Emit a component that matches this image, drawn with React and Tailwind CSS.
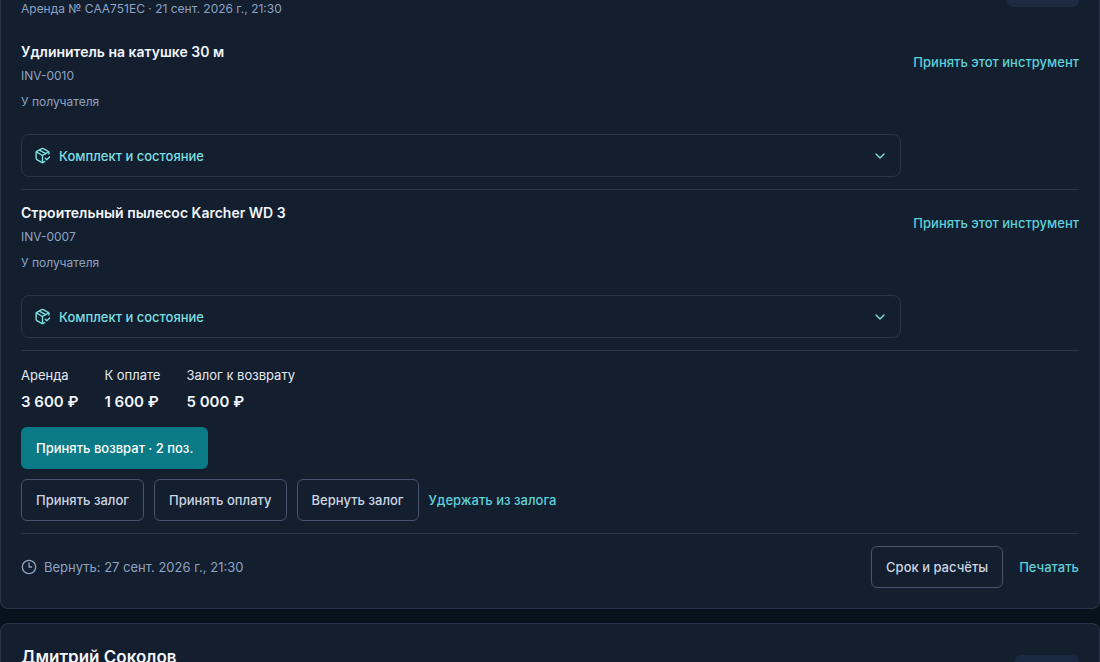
import React from 'react';
import { ChevronDown, Clock3, PackageCheck } from 'lucide-react';

const tools = [
    { code: 'INV-0010', name: 'Удлинитель на катушке 30 м', status: 'У получателя' },
    { code: 'INV-0007', name: 'Строительный пылесос Karcher WD 3', status: 'У получателя' },
];

const totals = [
    { label: 'Аренда', value: '3 600 ₽' },
    { label: 'К оплате', value: '1 600 ₽' },
    { label: 'Залог к возврату', value: '5 000 ₽' },
];

function OutlineButton({ children }) {
    return (
        <button
            type="button"
            className="h-[42px] px-[14px] rounded-md border border-[#46546d] text-[#cbd5e1] font-medium whitespace-nowrap"
        >
            {children}
        </button>
    );
}

function LinkButton({ children }) {
    return (
        <button type="button" className="h-[42px] text-[#5fd0d8] font-medium whitespace-nowrap">
            {children}
        </button>
    );
}

function ToolRow({ tool }) {
    return (
        <li className="flex items-start gap-3 py-3 border-b border-[#29364a]">
            <div className="flex-1 min-w-0">
                <h3 className="text-sm leading-[22px] font-semibold text-[#f1f5f9]">{tool.name}</h3>
                <p className="mt-1 text-xs leading-[18px] text-[#8ea3c2]">{tool.code}</p>
                <p className="mt-2 text-xs leading-[18px] text-[#8ea3c2]">{tool.status}</p>
                <button
                    type="button"
                    className="mt-[23px] w-full h-[43px] px-3 flex items-center gap-2 rounded-lg border border-[#29364a] text-[#7ddfe0] font-medium"
                >
                    <PackageCheck className="w-[17px] h-[17px]" />
                    <span>Комплект и состояние</span>
                    <ChevronDown className="w-4 h-4 ml-auto" />
                </button>
            </div>
            <LinkButton>Принять этот инструмент</LinkButton>
        </li>
    );
}

export default function App() {
    return (
        <div className="h-screen overflow-hidden bg-[#09111d] font-['Inter',sans-serif] text-[13px] leading-5 text-[#e2e8f0]">
            {/* Current rental */}
            <article className="px-5 pb-5 rounded-b-lg border border-t-0 border-[#29364a] bg-[#131e2f]">
                <header className="flex items-start justify-between pb-[11px]">
                    <p className="text-xs leading-[18px] text-[#8ea3c2]">
                        Аренда № CAA751EC · 21 сент. 2026 г., 21:30
                    </p>
                    <span className="w-[72px] h-[7px] rounded-b-md bg-[#1c2940]" />
                </header>

                <ul>
                    {tools.map((tool) => (
                        <ToolRow key={tool.code} tool={tool} />
                    ))}
                </ul>

                <dl className="flex gap-[26px] pt-[14px]">
                    {totals.map((item) => (
                        <div key={item.label}>
                            <dt>{item.label}</dt>
                            <dd className="mt-[6px] text-[15px] leading-[22px] font-semibold text-[#f1f5f9]">{item.value}</dd>
                        </div>
                    ))}
                </dl>

                {/* Actions */}
                <div className="mt-[14px] pb-3 border-b border-[#29364a]">
                    <button
                        type="button"
                        className="h-[42px] px-[15px] rounded-md bg-[#0b7a87] text-white font-medium"
                    >
                        Принять возврат · 2 поз.
                    </button>
                    <div className="mt-[10px] flex flex-wrap gap-[10px]">
                        <OutlineButton>Принять залог</OutlineButton>
                        <OutlineButton>Принять оплату</OutlineButton>
                        <OutlineButton>Вернуть залог</OutlineButton>
                        <LinkButton>Удержать из залога</LinkButton>
                    </div>
                </div>

                <footer className="pt-3 flex items-center gap-4">
                    <p className="mr-auto flex items-center gap-[7px] text-[#8ea3c2]">
                        <Clock3 className="w-4 h-4" />
                        Вернуть: 27 сент. 2026 г., 21:30
                    </p>
                    <OutlineButton>Срок и расчёты</OutlineButton>
                    <LinkButton>Печатать</LinkButton>
                </footer>
            </article>

            {/* Next rental */}
            <article className="mt-[14px] px-5 pt-5 pb-5 rounded-lg border border-[#29364a] bg-[#131e2f]">
                <header className="flex items-start justify-between">
                    <h2 className="text-[17px] leading-[26px] font-semibold text-[#f1f5f9]">Дмитрий Соколов</h2>
                    <span className="mt-[11px] w-16 h-6 rounded-md bg-[#192940]" />
                </header>
            </article>
        </div>
    );
}
